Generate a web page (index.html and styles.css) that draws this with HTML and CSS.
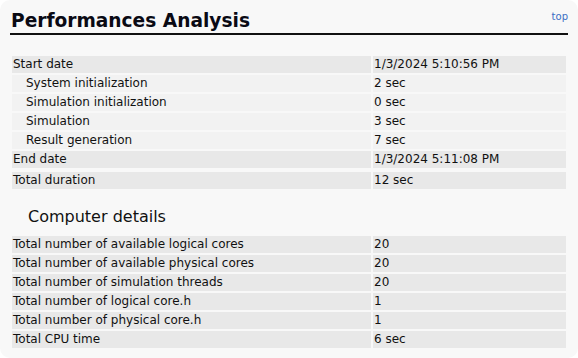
FILE: index.html
```html
<!DOCTYPE html>
<html>
<head>
<meta charset="utf-8">
<link rel="stylesheet" href="styles.css">
</head>
<body>
<div class="card">
  <div class="head">
    <h1 class="title">Performances Analysis</h1>
    <a class="top" href="#">top</a>
  </div>
  <table class="grid first">
    <tr class="dark"><td class="k">Start date</td><td class="v">1/3/2024 5:10:56 PM</td></tr>
    <tr class="light"><td class="k sub">System initialization</td><td class="v">2 sec</td></tr>
    <tr class="light"><td class="k sub">Simulation initialization</td><td class="v">0 sec</td></tr>
    <tr class="light"><td class="k sub">Simulation</td><td class="v">3 sec</td></tr>
    <tr class="light"><td class="k sub">Result generation</td><td class="v">7 sec</td></tr>
    <tr class="dark"><td class="k">End date</td><td class="v">1/3/2024 5:11:08 PM</td></tr>
  </table>
  <table class="grid">
    <tr class="dark"><td class="k">Total duration</td><td class="v">12 sec</td></tr>
  </table>
  <h2 class="sub-title">Computer details</h2>
  <table class="grid">
    <tr class="dark"><td class="k">Total number of available logical cores</td><td class="v">20</td></tr>
    <tr class="dark"><td class="k">Total number of available physical cores</td><td class="v">20</td></tr>
    <tr class="dark"><td class="k">Total number of simulation threads</td><td class="v">20</td></tr>
    <tr class="dark"><td class="k">Total number of logical core.h</td><td class="v">1</td></tr>
    <tr class="dark"><td class="k">Total number of physical core.h</td><td class="v">1</td></tr>
    <tr class="dark"><td class="k">Total CPU time</td><td class="v">6 sec</td></tr>
  </table>
</div>
</body>
</html>
```
FILE: styles.css
```css
html, body {
  margin: 0;
  padding: 0;
  background: #ffffff;
}
body {
  font-family: "DejaVu Sans", Verdana, sans-serif;
  color: #111;
}
.card {
  background: #f8f8f8;
  border-radius: 10px;
  width: 578px;
  height: 358px;
  box-sizing: border-box;
  padding: 8px 10px 0 10px;
  overflow: hidden;
}
.head {
  display: flex;
  justify-content: space-between;
  align-items: flex-start;
  border-bottom: 2px solid #111;
}
.title {
  margin: 0;
  font-size: 18.6px;
  font-weight: bold;
  line-height: 25px;
  color: #0a0a14;
  padding-left: 1px;
}
.top {
  font-size: 10px;
  color: #3b6fc4;
  text-decoration: none;
  margin-top: 3px;
}
.grid {
  border-collapse: separate;
  border-spacing: 2px;
  width: 558px;
  table-layout: fixed;
  font-size: 12px;
}
.first {
  margin-top: 19px;
}
.grid td {
  height: 17px;
  padding: 0 0 0 1px;
  line-height: 17px;
  white-space: nowrap;
  overflow: hidden;
}
.k {
  width: 358px;
}
.grid td.sub {
  padding-left: 14px;
  width: 345px;
}
.dark td {
  background: #e8e8e8;
}
.light td {
  background: #f2f2f2;
}
.sub-title {
  font-size: 16px;
  font-weight: normal;
  margin: 16px 0 7px 18px;
  line-height: 20px;
  color: #111;
}
```
